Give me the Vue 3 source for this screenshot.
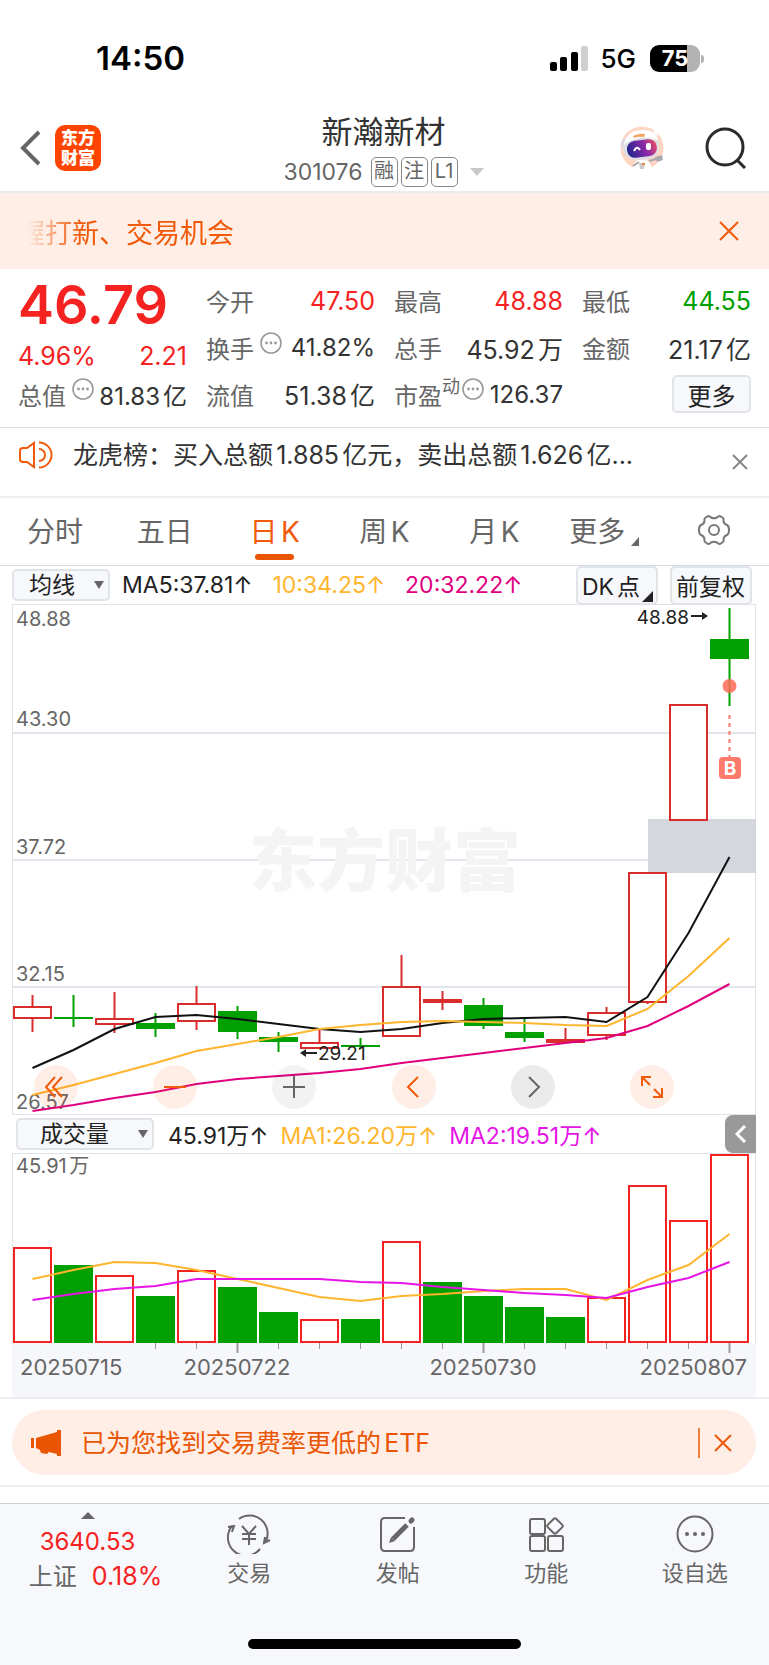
<script setup>
import { ref, computed } from "vue";

const quotes = [
    { label: "今开", value: "47.50", tone: "up" },
    { label: "最高", value: "48.88", tone: "up" },
    { label: "最低", value: "44.55", tone: "down" },
    { label: "换手", value: "41.82%", info: true },
    { label: "总手", value: "45.92万" },
    { label: "金额", value: "21.17亿" },
    { label: "总值", value: "81.83亿", info: true },
    { label: "流值", value: "51.38亿" },
    { label: "市盈", sup: "动", value: "126.37", info: true }
];

const tabs = ["分时", "五日", "日K", "周K", "月K"];
const activeTab = ref("日K");
const average = ref("均线");
const indicator = ref("成交量");

// [top, bottom, high, low, kind]
const candles = [
    [402, 414, 391, 428, "rise"],
    [413, 415, 391, 423, "fall"],
    [414, 420, 388, 429, "rise"],
    [419, 425, 409, 433, "fall"],
    [399, 417, 382, 426, "rise"],
    [407, 428, 402, 435, "fall"],
    [433, 438, 428, 448, "fall"],
    [438, 444, 425, 444, "rise"],
    [441, 443, 434, 445, "fall"],
    [382, 432, 351, 432, "rise"],
    [395, 399, 387, 406, "flat"],
    [401, 422, 394, 425, "fall"],
    [428, 434, 413, 438, "fall"],
    [435, 439, 424, 438, "flat"],
    [408, 431, 403, 436, "rise"],
    [268, 398, 268, 400, "rise"],
    [100, 216, 100, 216, "rise"],
    [35, 55, 4, 102, "fall"]
];

const priceLines = [
    { color: "#111111", ys: [464, 446, 425, 413, 411, 415, 420, 425, 428, 425, 419, 415, 414, 413, 418, 393, 329, 253] },
    { color: "#ffb52e", ys: [491, 481, 470, 459, 447, 440, 433, 425, 421, 418, 417, 418, 419, 421, 422, 405, 372, 334] },
    { color: "#e0007f", ys: [507, 501, 494, 488, 480, 475, 472, 469, 465, 459, 454, 449, 444, 439, 434, 422, 402, 380] }
];

// [top, kind]
const volumes = [
    [94, "rise"],
    [112, "fall"],
    [122, "rise"],
    [143, "fall"],
    [117, "rise"],
    [134, "fall"],
    [159, "fall"],
    [166, "rise"],
    [166, "fall"],
    [88, "rise"],
    [129, "fall"],
    [143, "fall"],
    [154, "fall"],
    [164, "fall"],
    [144, "rise"],
    [32, "rise"],
    [67, "rise"],
    [1, "rise"]
];
const volumeLines = [
    { color: "#ffb52e", ys: [126, 117, 109, 110, 117, 126, 135, 144, 148, 143, 141, 138, 136, 136, 147, 127, 112, 81] },
    { color: "#e614e6", ys: [147, 141, 136, 133, 126, 126, 126, 126, 129, 130, 134, 137, 140, 142, 145, 134, 125, 109] }
];

const grid = [129, 256, 383];
const priceLabels = [
    { text: "48.88", y: 22 },
    { text: "43.30", y: 122 },
    { text: "37.72", y: 250 },
    { text: "32.15", y: 377 },
    { text: "26.57", y: 505 }
];
const dates = [
    { text: "20250715", x: 8, anchor: "start" },
    { text: "20250722", x: 225, anchor: "middle" },
    { text: "20250730", x: 471, anchor: "middle" },
    { text: "20250807", x: 735, anchor: "end" }
];
const bigTicks = [5, 11, 17];

const centerX = (i) => 20.5 + i * 41;
const toPoints = (ys) => ys.map((y, i) => `${centerX(i)},${y}`).join(" ");

const volumeBars = computed(() => volumes.map(([top, kind], i) => ({ top, kind, x: centerX(i) })));
const ticks = candles.map((_, i) => i).filter((i) => i > 2);
</script>

<template>
    <div class="page">
        <div class="status">
            <span class="clock">14:50</span>
            <div class="status-right">
                <svg width="38" height="25" viewBox="0 0 38 25">
                    <rect x="0" y="16" width="7" height="9" rx="2" />
                    <rect x="10" y="11" width="7" height="14" rx="2" />
                    <rect x="21" y="6" width="7" height="19" rx="2" />
                    <rect x="31" y="0" width="7" height="25" rx="2" fill="#cfcfcf" />
                </svg>
                <span class="network">5G</span>
                <div class="battery"><span>75</span></div>
            </div>
        </div>

        <header class="nav">
            <div class="nav-left">
                <button class="plain" aria-label="返回">
                    <svg width="21" height="36" viewBox="0 0 21 36" fill="none" stroke="#666" stroke-width="4">
                        <path d="M19 2 3 18l16 16" />
                    </svg>
                </button>
                <div class="logo"><span>东方</span><span>财富</span></div>
            </div>
            <div class="nav-title">
                <h1>新瀚新材</h1>
                <div class="code">
                    <span>301076</span>
                    <div class="tags"><i>融</i><i>注</i><i>L1</i></div>
                    <svg class="code-caret" width="14" height="8" viewBox="0 0 14 8"><path d="M0 0h14L7 8z" fill="#c8c8c8" /></svg>
                </div>
            </div>
            <div class="nav-right">
                <button class="plain" aria-label="助手">
                    <svg width="46" height="46" viewBox="0 0 46 46">
                        <defs>
                            <linearGradient id="visor" x1="0" y1="0.3" x2="1" y2="0.1">
                                <stop offset="0" stop-color="#2b2590" />
                                <stop offset="0.55" stop-color="#8a2aa8" />
                                <stop offset="1" stop-color="#f0505c" />
                            </linearGradient>
                        </defs>
                        <circle cx="23" cy="23" r="21.5" fill="#ffd6c2" />
                        <path d="M13 45c2-7 4-11 10-11s9 4 10 11z" fill="#fff" />
                        <ellipse cx="5" cy="19" rx="3" ry="5" fill="#d9d9e2" />
                        <path d="M31 8q5 0 5-5 4 4 2 9z" fill="#fff" />
                        <path d="M4 22Q5 6 22 5q17-1 18 14 1 15-17 16Q4 36 4 22z" fill="#dedde4" />
                        <path d="M5 20Q7 6 22 5q15-1 17 11-8-5-18-3-11 2-16 7z" fill="#fff" />
                        <path d="M14 11q6-3 12-2l-1 3q-6-1-10 1z" fill="#f2a45c" />
                        <rect x="8" y="15" width="30" height="17" rx="8" fill="url(#visor)" transform="rotate(-7 23 24)" />
                        <path d="M15 26q3-6 6-1" fill="none" stroke="#fff" stroke-width="2" />
                        <rect x="27" y="18" width="5" height="7" rx="2" fill="#fff" />
                        <path d="M14 41l6-4M30 36l7-2" stroke="#a5a5ad" stroke-width="2" />
                        <path d="M36 32l7-2 1 5-6 2z" fill="#a9a9b0" />
                        <path d="M20 38h6l-1 6h-4z" fill="#cfc9cc" /><path d="M23 38h3v2h-3z" fill="#e8843c" />
                    </svg>
                </button>
                <button class="plain" aria-label="搜索">
                    <svg width="42" height="42" viewBox="0 0 42 42" fill="none" stroke="#2a2a2a" stroke-width="3">
                        <circle cx="20" cy="20" r="18" />
                        <path d="m32 33 8 8" />
                    </svg>
                </button>
            </div>
        </header>

        <div class="banner">
            <span class="marquee">握打新、交易机会</span>
            <button class="plain" aria-label="关闭">
                <svg width="20" height="20" viewBox="0 0 20 20" stroke="#f15a0a" stroke-width="2"><path d="M1 1l18 18M19 1 1 19" /></svg>
            </button>
        </div>

        <section class="quote">
            <div class="price up">
                <strong>46.79</strong>
                <div><span>4.96%</span><span>2.21</span></div>
            </div>
            <div v-for="q in quotes" :key="q.label" class="cell">
                <span class="label">{{ q.label }}</span>
                <sup v-if="q.sup">{{ q.sup }}</sup>
                <svg v-if="q.info" class="info" :class="{ tight: q.sup }" width="22" height="22" viewBox="0 0 22 22">
                    <circle cx="11" cy="11" r="10" fill="none" stroke="#999" stroke-width="1.6" />
                    <circle cx="6.5" cy="11" r="1.4" fill="#999" /><circle cx="11" cy="11" r="1.4" fill="#999" /><circle cx="15.5" cy="11" r="1.4" fill="#999" />
                </svg>
                <span class="value" :class="[q.tone, { small: q.info }]">{{ q.value }}</span>
            </div>
            <div class="cell"><button class="box more">更多</button></div>
        </section>

        <div class="news">
            <svg width="34" height="28" viewBox="0 0 34 28" fill="none" stroke="#f15a0a" stroke-width="2">
                <path d="M15 2v24l-7-5H4q-3 0-3-3v-8q0-3 3-3h4z" />
                <path d="M20 8a6 6 0 0 1 0 12M20 1.500a12.500 12.500 0 0 1 0 25" />
            </svg>
            <p>龙虎榜：买入总额1.885亿元，卖出总额1.626亿...</p>
            <button class="plain" aria-label="关闭">
                <svg width="16" height="16" viewBox="0 0 16 16" stroke="#888" stroke-width="2"><path d="M1 1l14 14M15 1 1 15" /></svg>
            </button>
        </div>

        <nav class="tabs">
            <button v-for="t in tabs" :key="t" class="plain" :class="{ active: t === activeTab }" @click="activeTab = t">{{ t }}</button>
            <button class="plain tab-more">
                更多
                <svg width="8" height="9" viewBox="0 0 8 9"><path d="M8 0v9H0z" fill="#666" /></svg>
            </button>
            <button class="plain" aria-label="设置">
                <svg width="34" height="32" viewBox="0 0 34 32" fill="none" stroke="#777" stroke-width="2">
                    <path d="M11 2Q13 2 14 3.500Q17 5 20 3.500Q21 2 23 2L26 4Q27 5 26.500 7Q27 10 30 11Q32 12 32 16Q32 20 30 21Q27 22 26.500 25Q27 27 26 28L23 30Q21 30 20 28.500Q17 27 14 28.500Q13 30 11 30L8 28Q7 27 7.500 25Q7 22 4 21Q2 20 2 16Q2 12 4 11Q7 10 7.500 7Q7 5 8 4Z" stroke-linejoin="round" />
                    <circle cx="17" cy="16" r="5" />
                </svg>
            </button>
        </nav>

        <div class="legend">
            <label class="picker">
                <select v-model="average" class="box" aria-label="均线">
                    <option>均线</option>
                </select>
                <svg width="10" height="8" viewBox="0 0 10 8"><path d="M0 0h10L5 8z" fill="#666" /></svg>
            </label>
            <span>MA5:37.81↑</span>
            <span class="yellow">10:34.25↑</span>
            <span class="pink">20:32.22↑</span>
            <div class="legend-actions">
                <button class="box">
                    DK点
                    <svg class="corner" width="11" height="11" viewBox="0 0 11 11"><path d="M11 0v11H0z" fill="#222" /></svg>
                </button>
                <button class="box">前复权</button>
            </div>
        </div>

        <div class="chart">
            <svg viewBox="0 0 744 511">
                <rect x="0.5" y="0.5" width="743" height="510" fill="#fff" stroke="#e0e3e8" />
                <line v-for="y in grid" :key="y" x1="0" x2="744" :y1="y" :y2="y" stroke="#e1e6ed" stroke-width="2" />
                <text class="watermark" x="373" y="282" text-anchor="middle">东方财富</text>
                <rect x="636" y="215" width="108" height="54" fill="#d4d7dd" />
                <text v-for="l in priceLabels" :key="l.text" class="axis" x="4" :y="l.y">{{ l.text }}</text>
                <g v-for="(c, i) in candles" :key="i" :class="c[4]">
                    <line v-if="c[2] < c[0]" :x1="centerX(i)" :x2="centerX(i)" :y1="c[2]" :y2="c[0]" />
                    <line v-if="c[3] > c[1]" :x1="centerX(i)" :x2="centerX(i)" :y1="c[1]" :y2="c[3]" />
                    <rect v-if="c[4] === 'rise'" :x="centerX(i) - 18.5" :y="c[0] + 1" width="37" :height="c[1] - c[0] - 1" />
                    <rect v-else :x="centerX(i) - 19.5" :y="c[0]" width="39" :height="c[1] - c[0]" />
                </g>
                <polyline v-for="l in priceLines" :key="l.color" :points="toPoints(l.ys)" :stroke="l.color" />

                <text class="mark" x="677" y="20" text-anchor="end">48.88</text>
                <path d="M679 12h13" stroke="#222" stroke-width="2" /><path d="M690 8l6 4-6 4z" fill="#222" />
                <text class="mark" x="306" y="456">29.21</text>
                <path d="M292 449h13" stroke="#222" stroke-width="2" /><path d="M294 445l-6 4 6 4z" fill="#222" />

                <circle cx="717.5" cy="82" r="7" fill="#ff6a55" fill-opacity="0.85" />
                <line x1="717.5" x2="717.5" y1="111" y2="153" stroke="#ff7a68" stroke-width="2" stroke-dasharray="4 4" />
                <rect x="707" y="153" width="22" height="22" rx="4" fill="#ff7a68" />
                <text class="buy" x="718" y="171" text-anchor="middle">B</text>
            </svg>
            <div class="tools">
                <button aria-label="最早"><svg viewBox="0 0 44 44"><path d="M21 12 12 22l9 10M28 12l-9 10 9 10" /></svg></button>
                <button aria-label="缩小"><svg viewBox="0 0 44 44"><path d="M11 22h22" /></svg></button>
                <button class="gray" aria-label="放大"><svg viewBox="0 0 44 44"><path d="M11 22h22M22 11v22" /></svg></button>
                <button aria-label="左移"><svg viewBox="0 0 44 44"><path d="M26 12 16 22l10 10" /></svg></button>
                <button class="gray dark" aria-label="右移"><svg viewBox="0 0 44 44"><path d="m18 12 10 10-10 10" /></svg></button>
                <button aria-label="全屏"><svg viewBox="0 0 44 44"><path d="M12 21v-9h9M12 12l8 8M23 32h9v-9M24 24l8 8" /></svg></button>
            </div>
        </div>

        <div class="legend volume-legend">
            <label class="picker">
                <select v-model="indicator" class="box wide" aria-label="指标">
                    <option>成交量</option>
                </select>
                <svg width="10" height="8" viewBox="0 0 10 8"><path d="M0 0h10L5 8z" fill="#666" /></svg>
            </label>
            <span>45.91万↑</span>
            <span class="yellow">MA1:26.20万↑</span>
            <span class="magenta">MA2:19.51万↑</span>
            <button class="fold" aria-label="展开">
                <svg width="12" height="18" viewBox="0 0 12 18" fill="none" stroke="#fff" stroke-width="3"><path d="M10 1 2 9l8 8" /></svg>
            </button>
        </div>

        <div class="chart">
            <svg viewBox="0 0 744 244">
                <rect x="0" y="190" width="744" height="54" fill="#f6f7fa" />
                <path d="M0.500 190V0.500H743.500V190" fill="none" stroke="#e0e3e8" />
                <text class="axis" x="4" y="20">45.91万</text>
                <template v-for="b in volumeBars" :key="b.x">
                    <rect v-if="b.kind === 'fall'" :x="b.x - 19.5" :y="b.top" width="39" :height="190 - b.top" fill="#00a000" />
                    <rect v-else :x="b.x - 18.5" :y="b.top + 1" width="37" :height="188 - b.top" fill="#fff" stroke="#f52222" stroke-width="2" />
                </template>
                <line v-for="i in ticks" :key="i" :x1="centerX(i)" :x2="centerX(i)" y1="190" :y2="bigTicks.includes(i) ? 200 : 196" stroke="#999" :stroke-width="bigTicks.includes(i) ? 2 : 1" />
                <polyline v-for="l in volumeLines" :key="l.color" :points="toPoints(l.ys)" :stroke="l.color" />
                <text v-for="d in dates" :key="d.text" class="date" :x="d.x" y="222" :text-anchor="d.anchor">{{ d.text }}</text>
            </svg>
        </div>

        <div class="promo">
            <div class="pill">
                <svg width="30" height="26" viewBox="0 0 30 26" fill="#ea5504">
                    <path d="M0 8h3v10H0zM5 8 26 2V0h4v26h-4v-2l-8-2-2 2-6-1-1-3-4-2z" />
                </svg>
                <a href="#">已为您找到交易费率更低的ETF</a>
                <i class="divider"></i>
                <button class="plain" aria-label="关闭">
                    <svg width="18" height="18" viewBox="0 0 18 18" stroke="#f15a0a" stroke-width="2"><path d="M1 1l16 16M17 1 1 17" /></svg>
                </button>
            </div>
        </div>

        <footer class="bottom">
            <div class="bottom-row">
                <button class="plain index">
                    <svg width="14" height="7" viewBox="0 0 14 7"><path d="M7 0l7 7H0z" fill="#666" /></svg>
                    <span class="up">3640.53</span>
                    <span class="index-name">上证<em class="up">0.18%</em></span>
                </button>
                <button class="plain item">
                    <svg width="44" height="40" viewBox="0 0 44 40">
                        <path d="M12 5a18 18 0 0 1 27 22M5 12a18 18 0 0 0 28 23M1 13l6-1-2 6M43 26l-6 3 1-6M15 12l7 8 7-8M22 20v11M15 20h14M15 25h14" />
                    </svg>
                    <span>交易</span>
                </button>
                <button class="plain item">
                    <svg width="40" height="40" viewBox="0 0 40 40">
                        <path d="M27 4H7Q3 4 3 8v25q0 4 4 4h25q4 0 4-4V13" />
                        <path d="M29 11 15 25" stroke-width="5" /><path d="m11 29 2-6 4 4z" fill="#666" stroke="none" /><path d="m33 7 1-1" stroke-width="5" stroke-linecap="round" />
                    </svg>
                    <span>发帖</span>
                </button>
                <button class="plain item">
                    <svg width="40" height="40" viewBox="0 0 40 40">
                        <rect x="4" y="5" width="15" height="15" rx="2" /><rect x="4" y="22" width="15" height="15" rx="2" /><rect x="22" y="22" width="15" height="15" rx="2" />
                        <rect x="23" y="6" width="12" height="12" rx="2" transform="rotate(45 29 12)" />
                    </svg>
                    <span>功能</span>
                </button>
                <button class="plain item">
                    <svg width="40" height="40" viewBox="0 0 40 40">
                        <circle cx="20" cy="20" r="17.500" />
                        <g fill="#666" stroke="none"><circle cx="12" cy="20" r="2" /><circle cx="20" cy="20" r="2" /><circle cx="28" cy="20" r="2" /></g>
                    </svg>
                    <span>设自选</span>
                </button>
            </div>
            <div class="home-bar"></div>
        </footer>
    </div>
</template>

<style>
body {
    margin: 0;
    background: #fff;
}
</style>

<style scoped>
.page {
    font-family: Inter, "Noto Sans CJK SC", sans-serif;
    font-size: 24px;
    color: #333;
    background: #fff;
    text-autospace: normal;
}

.page * {
    box-sizing: border-box;
}

svg {
    display: block;
    flex-shrink: 0;
}

button,
select {
    font: inherit;
    color: inherit;
    cursor: pointer;
}

.plain {
    padding: 0;
    border: none;
    background: none;
}

.box {
    padding: 0 0 3px;
    border: 2px solid #e0e3e8;
    border-radius: 5px;
    background: #f7f8fb;
    color: #222;
}

.up {
    color: #f52222;
}

.down {
    color: #00a000;
}

.yellow {
    color: #ffb52e;
}

.pink {
    color: #e0007f;
}

.magenta {
    color: #e614e6;
}

.status {
    display: flex;
    justify-content: space-between;
    align-items: center;
    height: 104px;
    padding: 12px 64px 0 96px;
    color: #000;
}

.clock {
    font-size: 33px;
    font-weight: 600;
}

.status-right {
    display: flex;
    align-items: center;
}

.network {
    margin: 0 14px 0 12px;
    font-size: 26px;
    font-weight: 500;
}

.battery {
    position: relative;
    width: 50px;
    height: 27px;
    margin-right: 5px;
    border-radius: 9px;
    background: linear-gradient(90deg, #000 75%, #b3b3b3 75%);
    color: #fff;
    font-size: 22px;
    font-weight: 700;
    line-height: 27px;
    text-align: center;
}

.battery::after {
    content: "";
    position: absolute;
    left: 51px;
    top: 10px;
    width: 3px;
    height: 8px;
    border-radius: 0 3px 3px 0;
    background: #b3b3b3;
}

.nav {
    display: grid;
    grid-template-columns: 1fr auto 1fr;
    align-items: center;
    height: 89px;
    padding: 0 22px 0 20px;
    border-bottom: 2px solid #ebebee;
}

.nav-left,
.nav-right {
    display: flex;
    align-items: center;
}

.nav-left {
    gap: 14px;
}

.nav-right {
    justify-content: flex-end;
    gap: 40px;
}

.logo {
    display: flex;
    flex-direction: column;
    justify-content: center;
    width: 46px;
    height: 46px;
    border-radius: 10px;
    background: #ff4400;
    color: #fff;
    font-size: 17px;
    font-weight: 900;
    line-height: 20px;
    text-align: center;
}

.nav-title {
    padding-top: 8px;
    text-align: center;
}

.nav-title h1 {
    margin: 0;
    font-size: 31px;
    font-weight: 400;
    line-height: 40px;
}

.code {
    display: flex;
    align-items: center;
    height: 40px;
    gap: 8px;
    color: #666;
    font-size: 23px;
}

.tags {
    display: flex;
    gap: 3px;
}

.tags i {
    width: 27px;
    height: 30px;
    border: 1px solid #888;
    border-radius: 5px;
    font-size: 20px;
    font-style: normal;
    line-height: 27px;
    text-align: center;
}

.code-caret {
    margin-left: 4px;
}

.banner {
    display: flex;
    justify-content: space-between;
    align-items: center;
    height: 76px;
    padding: 0 30px 0 18px;
    background: #feeee6;
    color: #f15a0a;
    font-size: 27px;
}

.marquee {
    white-space: nowrap;
    mask-image: linear-gradient(90deg, transparent 10px, #000 60px);
}

.quote {
    display: grid;
    grid-template-columns: repeat(4, 1fr);
    grid-template-rows: 47px 47px 46px;
    column-gap: 19px;
    padding: 8px 18px 10px;
    border-bottom: 1px solid #dfdfe2;
}

.price {
    grid-row: span 2;
}

.price strong {
    display: block;
    font-size: 54px;
    font-weight: 600;
    line-height: 56px;
}

.price div {
    display: flex;
    justify-content: space-between;
    font-size: 25px;
    line-height: 46px;
}

.cell {
    display: flex;
    align-items: center;
    white-space: nowrap;
}

.label,
.cell sup {
    color: #666;
}

.cell sup {
    align-self: flex-start;
    font-size: 18px;
    line-height: 32px;
}

.info {
    margin: 0 0 10px 6px;
}

.info.tight {
    margin-left: 2px;
}

.value {
    margin-left: auto;
    font-size: 25px;
}

.value.small {
    font-size: 24px;
}

.more {
    width: 79px;
    height: 38px;
    margin-left: auto;
}

.news {
    display: flex;
    align-items: flex-start;
    height: 70px;
    padding: 0 21px 0 19px;
    border-bottom: 2px solid #eeeeef;
    font-size: 25px;
}

.news > svg {
    margin-top: 13px;
}

.news p {
    flex: 1;
    margin: 0 0 0 20px;
    line-height: 54px;
    white-space: nowrap;
}

.news button {
    margin-top: 26px;
}

.tabs {
    display: grid;
    grid-template-columns: repeat(7, 1fr);
    height: 68px;
    border-bottom: 1px solid #d3dae1;
    color: #666;
    font-size: 28px;
}

.tabs button {
    display: flex;
    justify-content: center;
    align-items: center;
    position: relative;
    padding-bottom: 3px;
}

.tabs .active {
    color: #f15a0a;
}

.tabs .active::after {
    content: "";
    position: absolute;
    bottom: 5px;
    width: 39px;
    height: 6px;
    border-radius: 3px;
    background: #ea5504;
}

.tab-more svg {
    margin: 22px 0 0 6px;
}

.legend {
    display: flex;
    align-items: center;
    height: 38px;
    margin: 0 17px 0 12px;
    gap: 20px;
    color: #222;
    font-size: 23px;
    white-space: nowrap;
    text-autospace: no-autospace;
}

.picker {
    display: flex;
    align-items: center;
    position: relative;
    margin-right: -8px;
}

.picker select {
    width: 98px;
    height: 32px;
    padding: 0 0 0 15px;
    appearance: none;
    line-height: 28px;
}

.picker .wide {
    width: 138px;
    padding-left: 22px;
}

.picker svg {
    position: absolute;
    right: 6px;
    pointer-events: none;
}

.legend-actions {
    display: flex;
    gap: 12px;
    margin-left: auto;
}

.legend-actions .box {
    position: relative;
    width: 82px;
    height: 39px;
    padding: 0 4px 2px;
    text-align: left;
    text-autospace: normal;
}

.corner {
    position: absolute;
    right: 3px;
    bottom: 1px;
}

.chart {
    position: relative;
    margin: 0 13px 0 12px;
}

.chart > svg {
    width: 100%;
    height: auto;
}

.axis {
    fill: #666;
    font-size: 20px;
}

.date {
    fill: #666;
    font-size: 22px;
}

.mark {
    fill: #222;
    font-size: 19px;
}

.watermark {
    fill: #f4f4f4;
    font-size: 68px;
    font-weight: 900;
}

.buy {
    fill: #fff;
    font-size: 19px;
    font-weight: 700;
}

polyline {
    fill: none;
    stroke-width: 2;
}

.rise line,
.rise rect,
.flat line {
    stroke: #d92c2c;
    stroke-width: 2;
}

.rise rect {
    fill: #fff;
}

.flat rect {
    fill: #d92c2c;
}

.fall line {
    stroke: #00a000;
    stroke-width: 2;
}

.fall rect {
    fill: #00a000;
}

.tools {
    display: flex;
    justify-content: space-between;
    position: absolute;
    left: 22px;
    right: 82px;
    bottom: 6px;
}

.tools button {
    width: 44px;
    height: 44px;
    padding: 0;
    border: none;
    border-radius: 50%;
    background: rgba(241, 90, 10, 0.1);
}

.tools path {
    fill: none;
    stroke: #f15a0a;
    stroke-width: 2;
}

.tools .gray {
    background: rgba(0, 0, 0, 0.05);
}

.tools .dark {
    background: rgba(0, 0, 0, 0.08);
}

.tools .gray path {
    stroke: #666;
}

.volume-legend {
    margin: 0 13px 0 16px;
    gap: 12px;
}

.volume-legend .picker {
    margin-right: 2px;
}

.fold {
    display: flex;
    justify-content: center;
    align-items: center;
    width: 31px;
    height: 38px;
    margin-left: auto;
    padding: 0;
    border: none;
    border-radius: 8px 0 0 8px;
    background: #999;
}

.promo {
    padding: 11px 13px 10px 12px;
    border: solid #ecedf1;
    border-width: 2px 0;
}

.pill {
    display: flex;
    align-items: center;
    height: 65px;
    padding: 0 24px 0 19px;
    border-radius: 33px;
    background: #feeee6;
    font-size: 25px;
}

.pill a {
    flex: 1;
    margin-left: 20px;
    padding-bottom: 4px;
    color: #ea5504;
    text-decoration: none;
}

.divider {
    width: 2px;
    height: 30px;
    margin-right: 14px;
    background: #f0803f;
}

.bottom {
    margin-top: 16px;
    padding-bottom: 16px;
    border-top: 1px solid #cfd2d5;
    background: #f7f8fb;
}

.bottom-row {
    display: grid;
    grid-template-columns: 175px repeat(4, 1fr);
    height: 135px;
}

.bottom-row button {
    display: flex;
    flex-direction: column;
    align-items: center;
    color: #666;
}

.index {
    padding-top: 8px;
}

.index > span {
    line-height: 34px;
}

.index > .up {
    padding-top: 6px;
}

.index-name {
    padding-left: 16px;
}

.index-name em {
    margin-left: 12px;
    font-size: 25px;
    font-style: normal;
}

.item {
    padding-top: 10px;
    font-size: 22px;
    line-height: 38px;
}

.item svg {
    fill: none;
    stroke: #666;
    stroke-width: 2;
}

.home-bar {
    width: 273px;
    height: 10px;
    margin: 0 auto;
    border-radius: 5px;
    background: #000;
}
</style>
